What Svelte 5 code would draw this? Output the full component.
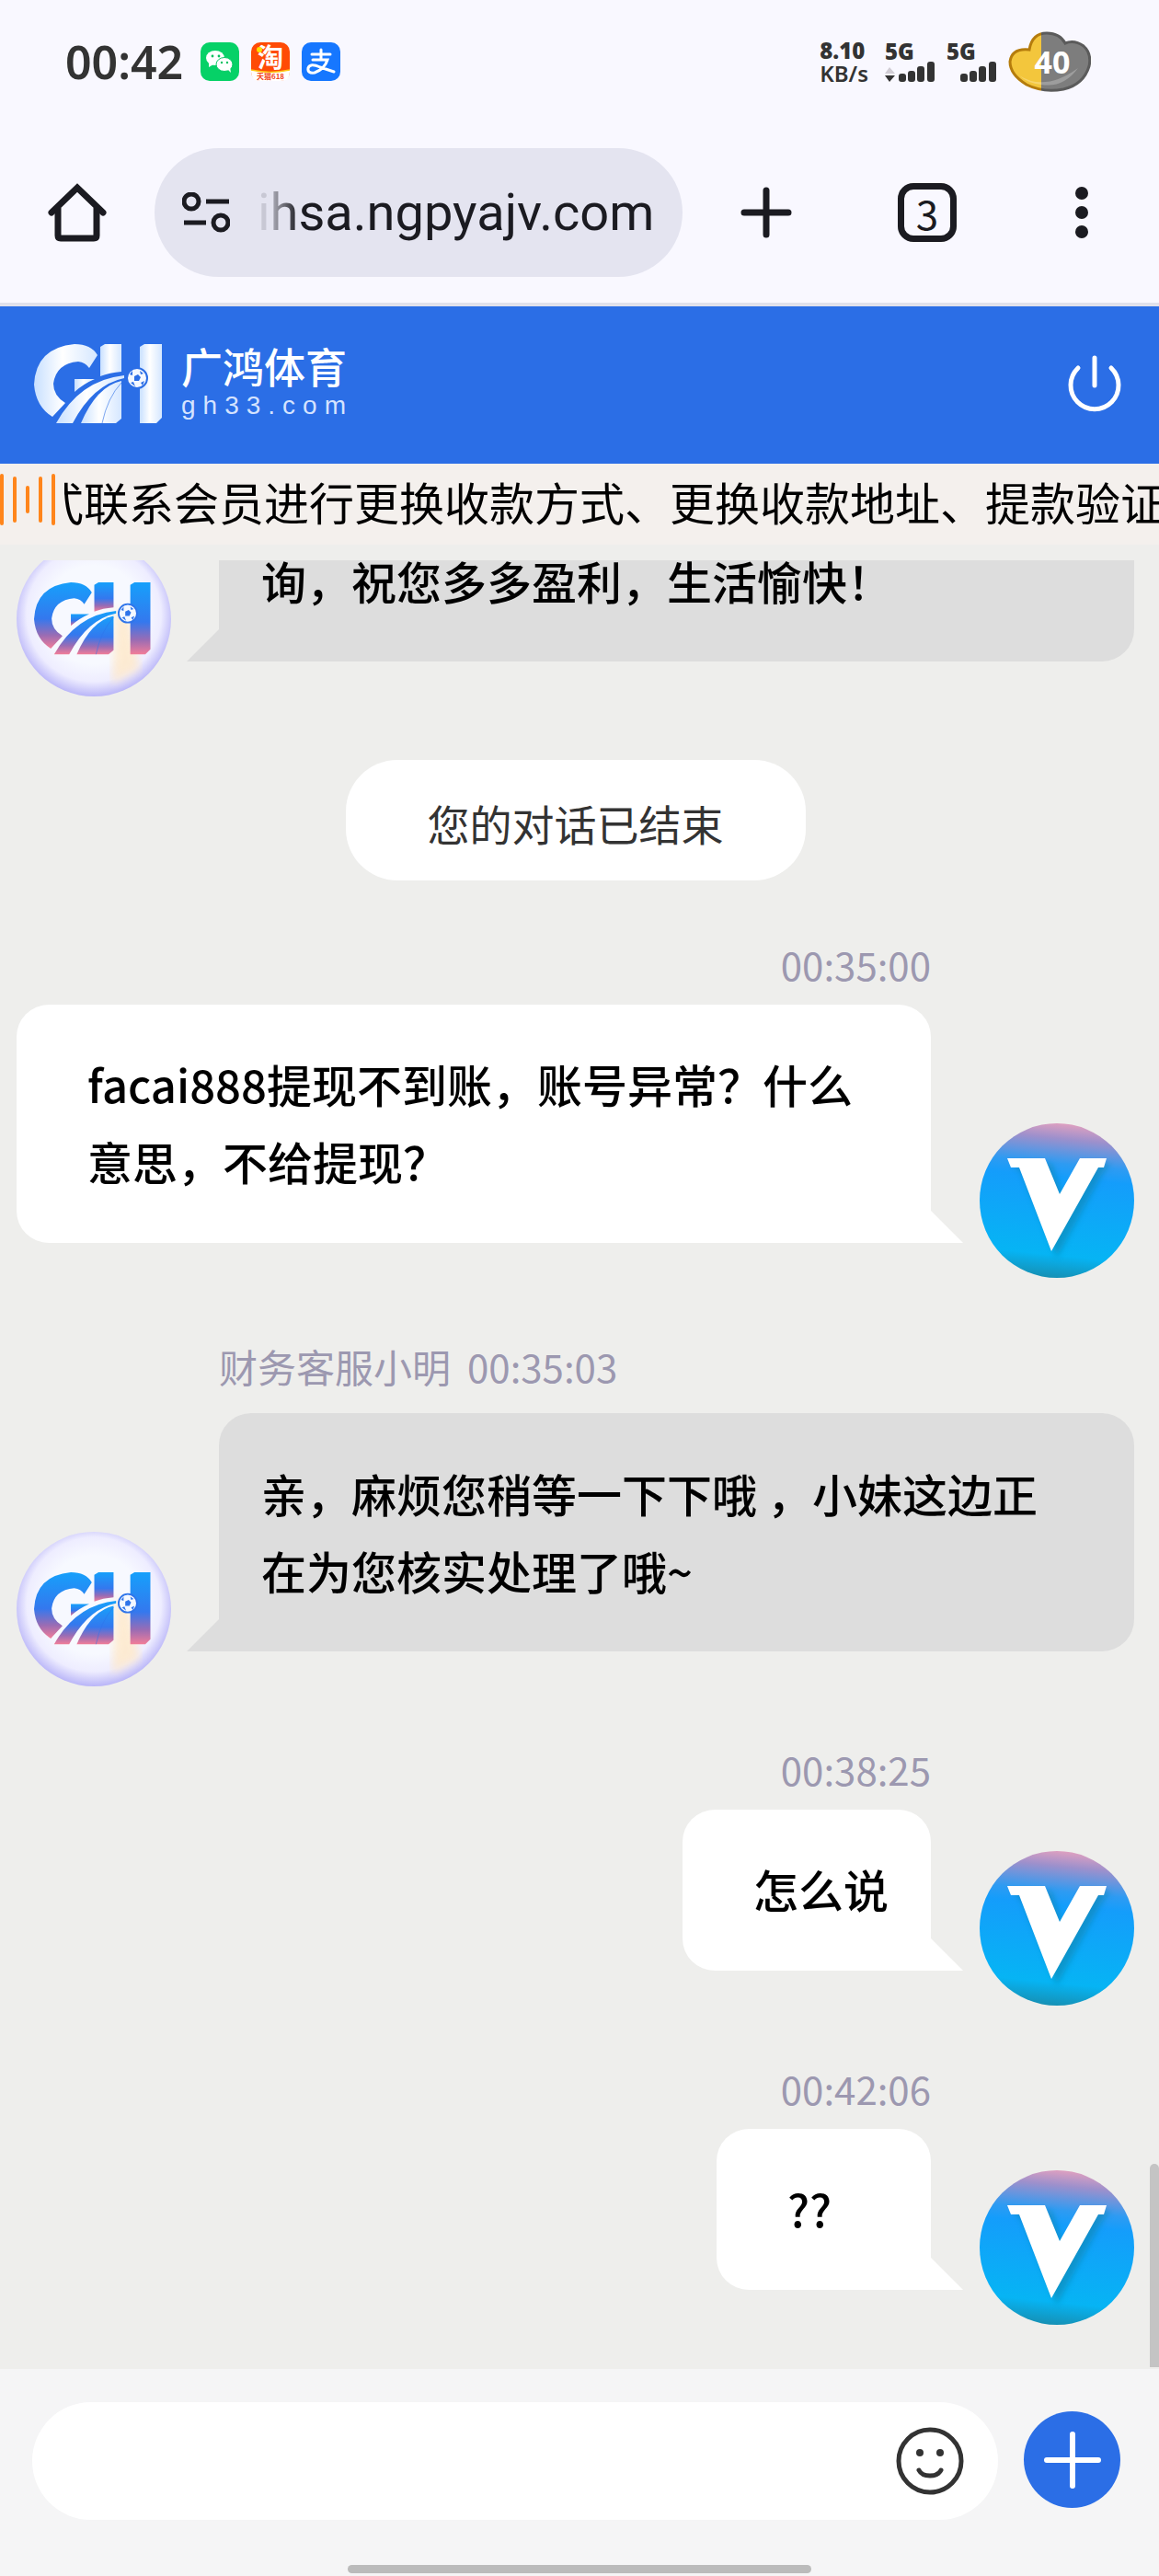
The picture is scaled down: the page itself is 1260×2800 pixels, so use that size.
<script lang="ts">
  const messages = [
    { from: "agent", name: "", time: "", text: "询，祝您多多盈利，生活愉快！" },
    { from: "notice", name: "", time: "", text: "您的对话已结束" },
    { from: "user", name: "", time: "00:35:00", text: "facai888提现不到账，账号异常？什么意思，不给提现？" },
    { from: "agent", name: "财务客服小明", time: "00:35:03", text: "亲，麻烦您稍等一下下哦 ，小妹这边正在为您核实处理了哦~" },
    { from: "user", name: "", time: "00:38:25", text: "怎么说" },
    { from: "user", name: "", time: "00:42:06", text: "??" },
  ];

  let draft = "";
</script>

<svelte:head>
  <title>广鸿体育</title>
</svelte:head>

{#snippet ghMark(fill, ball)}
  <path
    {fill}
    d="M69 12 L60 26 Q56 20 48 19 Q24 21 21 43 Q21 56 34 64 L20 79 Q2 68 0 44 Q2 4 44 0 Q62 0 69 12 Z"
  />
  <path {fill} d="M72 3 L77 0 H95 V30 Q82 31 72 35 Z" />
  <path {fill} d="M115 3 L120 0 H139 V80 L133 86 H115 Z" />
  <path {fill} d="M44 38 H66 Q54 43 44 52 Z" />
  <path {fill} d="M24 86 Q50 39 98 34 V37 Q64 44 42 86 Z" />
  <path {fill} d="M51 86 Q68 46 95 40 V81 L89 86 Z" />
  <path fill="none" stroke={ball} stroke-width="1" opacity="0.6" d="M74 86 Q80 58 95 42" />
  <circle cx="112" cy="37" r="11" fill="#f4f8ff" stroke={ball} stroke-width="2" />
  <path
    fill={ball}
    d="M109 35 L113 33 L116 36 L114 40 L109 40 Z M104 33 L107 29 L107 34 Z M115 29 L119 32 L116 33 Z M105 42 L108 41 L110 46 Z M116 42 L120 40 L118 45 Z"
  />
{/snippet}

{#snippet signal()}
  <rect x="0" y="13" width="8" height="9" rx="3" />
  <rect x="10" y="10" width="8" height="12" rx="3" />
  <rect x="20" y="5" width="8" height="17" rx="3" />
  <rect x="31" y="0" width="8" height="22" rx="3" />
{/snippet}

<div class="screen">
  <div class="status">
    <span class="clock">00:42</span>
    <svg class="app" viewBox="0 0 42 42">
      <rect width="42" height="42" rx="10" fill="#06d167" />
      <ellipse cx="16" cy="17" rx="10" ry="8" fill="#fff" />
      <path d="M9 22 L9 27 L14 24 Z" fill="#fff" />
      <circle cx="13" cy="15" r="1.4" fill="#06c160" />
      <circle cx="20" cy="15" r="1.4" fill="#06c160" />
      <ellipse cx="26" cy="24" rx="9" ry="7.5" fill="#fff" stroke="#06c964" stroke-width="1" />
      <path d="M29 29 L33 33 L32 27 Z" fill="#fff" />
      <circle cx="23" cy="22" r="1.2" fill="#06c160" />
      <circle cx="29" cy="22" r="1.2" fill="#06c160" />
    </svg>
    <svg class="app" viewBox="0 0 42 42">
      <rect width="42" height="42" rx="10" fill="#ff4b05" />
      <path d="M0 30 Q21 35 42 30 V32 Q42 42 32 42 H10 Q0 42 0 32 Z" fill="#fff" />
      <path d="M0 30 Q21 35 42 30" fill="none" stroke="#ffc814" stroke-width="1.5" />
      <text x="7" y="27" font-size="28" font-weight="700" fill="#fff">淘</text>
      <circle cx="9" cy="8" r="3" fill="#ffe000" />
      <text x="21" y="40" font-size="8" font-weight="700" fill="#f2471c" text-anchor="middle">天猫618</text>
    </svg>
    <svg class="app" viewBox="0 0 42 42">
      <rect width="42" height="42" rx="10" fill="#1677ff" />
      <g fill="none" stroke="#fff" stroke-linecap="round" stroke-width="3">
        <path d="M11 13 H31 M21 8 V19 M12 19 H28 Q25 29 14 33 Q6 34 7 28 Q9 22 20 27 L35 32" />
      </g>
    </svg>
    <div class="status-right">
      <div class="speed"><b>8.10</b><span>KB/s</span></div>
      <div class="net">
        <b>5G</b>
        <svg viewBox="0 0 55 22" fill="#333">
          <path d="M0 13 L5 6 L11 13 Z" fill="#d0ccd4" />
          <path d="M0 15 H11 L5 22 Z" />
          <g transform="translate(15 0)">{@render signal()}</g>
        </svg>
      </div>
      <div class="net">
        <b>5G</b>
        <svg viewBox="0 0 55 22" fill="#333">
          <g transform="translate(15 0)">{@render signal()}</g>
        </svg>
      </div>
      <svg class="battery" viewBox="0 0 90 66">
        <defs>
          <linearGradient id="charge">
            <stop offset="0.39" stop-color="#f3c63c" />
            <stop offset="0.39" stop-color="#7d7d7d" />
          </linearGradient>
          <linearGradient id="rim">
            <stop offset="0.39" stop-color="#b57c0c" />
            <stop offset="0.39" stop-color="#5b5b5b" />
          </linearGradient>
        </defs>
        <path
          d="M23 20 Q26 2 42 2 Q56 2 62 13 Q72 9 82 16 Q91 24 88 38 Q82 58 60 63 Q38 67 20 58 Q2 47 2 33 Q4 18 23 20 Z"
          fill="url(#charge)"
          stroke="url(#rim)"
          stroke-width="3"
        />
        <path d="M12 48 Q40 66 76 40 Q60 62 36 58 Q20 56 12 48 Z" fill="#fff" opacity="0.25" />
        <text x="48" y="46" font-size="34" font-weight="700" fill="#fff" text-anchor="middle">40</text>
      </svg>
    </div>
  </div>

  <div class="browser">
    <button class="home" aria-label="Home">
      <svg width="64" height="64" viewBox="0 0 64 64" fill="none" stroke="#1b1b21" stroke-width="7">
        <path d="M4 32 L32 5 L60 32" stroke-linecap="round" />
        <path d="M11 27 V57 Q11 60 14 60 H50 Q53 60 53 57 V27" />
      </svg>
    </button>
    <div class="address">
      <svg width="52" height="44" viewBox="0 0 52 44" fill="none" stroke="#1b1b21" stroke-width="5">
        <circle cx="10" cy="10" r="8" />
        <circle cx="42" cy="33" r="8" />
        <path d="M26 10 H51 M2 33 H26" />
      </svg>
      <input aria-label="Address" value="ihsa.ngpyajv.com" />
    </div>
    <button class="new-tab" aria-label="New tab">
      <svg width="56" height="56" viewBox="0 0 56 56" stroke="#1b1b21" stroke-width="7" stroke-linecap="round">
        <path d="M28 4 V52 M4 28 H52" />
      </svg>
    </button>
    <button class="tabs" aria-label="Tabs">3</button>
    <button class="more" aria-label="More">
      <svg width="14" height="58" viewBox="0 0 14 58" fill="#1b1b21">
        <circle cx="7" cy="8" r="7" />
        <circle cx="7" cy="29" r="7" />
        <circle cx="7" cy="50" r="7" />
      </svg>
    </button>
  </div>

  <header>
    <svg width="140" height="86" viewBox="0 0 140 86">
      <defs>
        <linearGradient id="ice">
          <stop offset="0" stop-color="#c8e0ff" />
          <stop offset="0.45" stop-color="#fff" />
          <stop offset="1" stop-color="#d5e7ff" />
        </linearGradient>
      </defs>
      {@render ghMark("url(#ice)", "#2c6ee6")}
    </svg>
    <div class="brand">
      <strong>广鸿体育</strong>
      <span>gh33.com</span>
    </div>
    <button aria-label="退出">
      <svg width="60" height="64" viewBox="0 0 60 64" fill="none" stroke="#fff" stroke-width="5" stroke-linecap="round">
        <path d="M30 4 V34 M12 15 A26 26 0 1 0 48 15" />
      </svg>
    </button>
  </header>

  <div class="marquee">
    <svg width="62" height="60" viewBox="0 0 62 60" stroke="#ff851b" stroke-width="4" stroke-linecap="round">
      <path d="M2 4 V56 M16 7 V53 M30 17 V43 M44 7 V53 M58 4 V56" />
    </svg>
    <div class="marquee-window">
      <p>式联系会员进行更换收款方式、更换收款地址、提款验证</p>
    </div>
  </div>

  <main>
    {#each messages as message}
      {#if message.from === "notice"}
        <p class="notice">{message.text}</p>
      {:else}
        <div class="row {message.from}">
          {#if message.from === "agent"}
            <svg class="avatar" viewBox="0 0 168 168">
              <defs>
                <radialGradient id="pearl" cy="0.47" r="0.53">
                  <stop offset="0.6" stop-color="#f7f9ff" />
                  <stop offset="0.82" stop-color="#eeedff" />
                  <stop offset="1" stop-color="#b9b5f8" />
                </radialGradient>
                <linearGradient id="dusk" x2="0" y2="1">
                  <stop offset="0" stop-color="#16a0fb" />
                  <stop offset="0.55" stop-color="#3478ee" />
                  <stop offset="0.8" stop-color="#9a6cb4" />
                  <stop offset="1" stop-color="#f27d98" />
                </linearGradient>
                <filter id="glow"><feGaussianBlur stdDeviation="5" /></filter>
              </defs>
              <circle cx="84" cy="84" r="84" fill="url(#pearl)" />
              <path d="M108 70 L122 80 L134 138 L104 154 Z" fill="#ffe8c8" opacity="0.8" filter="url(#glow)" />
              <g transform="translate(19 44) scale(0.91 0.91)">
                {@render ghMark("url(#dusk)", "#2e74ea")}
              </g>
            </svg>
          {/if}
          <div class="body">
            {#if message.time}
              <div class="meta">
                {#if message.name}<span>{message.name}</span>{/if}
                <time>{message.time}</time>
              </div>
            {/if}
            <div class="bubble">{message.text}</div>
          </div>
          {#if message.from === "user"}
            <svg class="avatar" viewBox="0 0 168 168">
              <defs>
                <linearGradient id="sky" x1="0.55" y1="0" x2="0.45" y2="1">
                  <stop offset="0" stop-color="#dfa0c0" />
                  <stop offset="0.1" stop-color="#9d90cc" />
                  <stop offset="0.26" stop-color="#2e9bf2" />
                  <stop offset="0.35" stop-color="#149dfb" />
                  <stop offset="0.85" stop-color="#06b4f4" />
                  <stop offset="1" stop-color="#1690b4" />
                </linearGradient>
                <filter id="soft"><feGaussianBlur stdDeviation="3" /></filter>
              </defs>
              <circle cx="84" cy="84" r="84" fill="url(#sky)" />
              <path d="M36 44 H78 L92 84 L112 44 H142 L134 54 L84 146 L46 54 Z" fill="#0a86b0" opacity="0.6" filter="url(#soft)" />
              <path d="M30 38 H71 L87 77 L109 38 H138 L135 48 H129 L78 139 L43 48 H34 Z" fill="#fff" />
            </svg>
          {/if}
        </div>
      {/if}
    {/each}
    <div class="scrollbar"></div>
  </main>

  <footer>
    <div class="composer">
      <input aria-label="输入消息" bind:value={draft} />
      <button class="emoji" aria-label="表情">
        <svg width="74" height="74" viewBox="0 0 74 74" fill="none" stroke="#333" stroke-width="5" stroke-linecap="round">
          <circle cx="37" cy="37" r="34" />
          <path d="M25 47 Q28 53 37 53 Q46 53 49 47" />
          <circle cx="26" cy="28" r="4" fill="#333" stroke="none" />
          <circle cx="48" cy="28" r="4" fill="#333" stroke="none" />
        </svg>
      </button>
    </div>
    <button class="add" aria-label="更多">
      <svg width="64" height="64" viewBox="0 0 64 64" stroke="#fff" stroke-width="6" stroke-linecap="round">
        <path d="M32 4 V60 M4 32 H60" />
      </svg>
    </button>
    <div class="indicator"></div>
  </footer>
</div>

<style>
  :global(body) {
    margin: 0;
  }

  .screen {
    display: flex;
    flex-direction: column;
    height: 100vh;
    overflow: hidden;
    background: #eeeeec;
    color: #000;
    font-family: "Noto Sans CJK SC", sans-serif;
  }

  button {
    display: flex;
    align-items: center;
    justify-content: center;
    padding: 0;
    border: 0;
    background: none;
    cursor: pointer;
  }

  input {
    border: 0;
    outline: none;
    background: none;
  }

  p {
    margin: 0;
  }

  svg {
    display: block;
    flex-shrink: 0;
  }

  .status {
    display: flex;
    align-items: center;
    gap: 13px;
    height: 133px;
    padding: 0 74px 2px 71px;
    background: #f9f8ff;
    color: #333;
  }

  .clock {
    margin-right: 6px;
    font: 600 50px/60px "Noto Sans", sans-serif;
  }

  .app {
    width: 42px;
    height: 42px;
  }

  .status-right {
    display: flex;
    align-items: center;
    gap: 12px;
    margin-left: auto;
    font-family: "Noto Sans", sans-serif;
  }

  .speed {
    display: flex;
    flex-direction: column;
    margin-right: 6px;
    font: 600 24px/25px "Noto Sans", sans-serif;
  }

  .net {
    font: 600 24px/22px "Noto Sans", sans-serif;
  }

  .net svg {
    width: 55px;
    height: 22px;
  }

  .battery {
    width: 90px;
    height: 66px;
  }

  .browser {
    display: flex;
    align-items: center;
    height: 192px;
    padding: 0 77px 2px 52px;
    border-bottom: 4px solid #e0e1eb;
    background: #f9f8ff;
  }

  .address {
    display: flex;
    flex: 1;
    align-items: center;
    gap: 30px;
    min-width: 0;
    height: 140px;
    margin: 0 63px 0 52px;
    padding: 0 16px 0 30px;
    box-sizing: border-box;
    border-radius: 70px;
    background: #e4e4f0;
  }

  .address input {
    flex: 1;
    min-width: 0;
    padding: 0;
    background: linear-gradient(90deg, #c8c8d4 10px, #1b1b21 45px);
    background-clip: text;
    color: transparent;
    font: 400 56px/80px Roboto, sans-serif;
  }

  .tabs {
    width: 64px;
    height: 64px;
    margin: 0 129px 0 115px;
    border: 7px solid #1b1b21;
    border-radius: 17px;
    box-sizing: border-box;
    color: #1b1b21;
    font: 400 44px/50px "Noto Sans CJK SC", sans-serif;
  }

  header {
    display: flex;
    align-items: center;
    gap: 20px;
    height: 168px;
    padding: 0 40px 3px 37px;
    background: #2b6ee6;
    color: #fff;
  }

  header button {
    margin-left: auto;
  }

  .brand {
    display: flex;
    flex-direction: column;
    padding-bottom: 6px;
  }

  .brand strong {
    font-size: 45px;
    font-weight: 500;
    line-height: 54px;
  }

  .brand span {
    color: #d5e3ff;
    font: 400 28px/32px "Liberation Sans", sans-serif;
    letter-spacing: 8px;
  }

  .marquee {
    display: flex;
    gap: 8px;
    height: 88px;
    background: #f4f0ed;
  }

  .marquee svg {
    margin-top: 9px;
  }

  .marquee-window {
    flex: 1;
    min-width: 0;
    overflow: hidden;
  }

  .marquee p {
    margin-left: -28px;
    font-size: 49px;
    line-height: 82px;
    white-space: nowrap;
  }

  main {
    position: relative;
    display: flex;
    flex: 1;
    flex-direction: column;
    justify-content: flex-end;
    min-height: 0;
    margin-top: 17px;
    padding: 0 27px 86px 18px;
    overflow: hidden;
  }

  .row {
    display: flex;
    align-items: flex-end;
    gap: 52px;
  }

  .row.user {
    gap: 53px;
  }

  .row + .row {
    margin-top: 98px;
  }

  .row + .agent {
    margin-top: 104px;
  }

  .avatar {
    width: 168px;
    height: 168px;
    margin-bottom: -38px;
  }

  .body {
    display: flex;
    flex: 1;
    flex-direction: column;
    align-items: flex-start;
    min-width: 0;
  }

  .user .body {
    align-items: flex-end;
  }

  .meta {
    display: flex;
    gap: 18px;
    margin-bottom: 14px;
    color: #9c98b0;
    font-size: 42px;
    line-height: 60px;
  }

  .agent .meta {
    margin-bottom: 21px;
  }

  .bubble {
    position: relative;
    min-width: 233px;
    padding: 45px 77px 46px 46px;
    box-sizing: border-box;
    border-radius: 35px 35px 35px 0;
    background: #ddd;
    font-size: 49px;
    font-weight: 500;
    line-height: 84px;
  }

  .agent .bubble {
    width: 100%;
  }

  .user .bubble {
    padding: 44px 46px 47px 77px;
    border-radius: 35px 35px 0 35px;
    background: #fff;
  }

  .bubble::after {
    content: "";
    position: absolute;
    right: 100%;
    bottom: 0;
    width: 35px;
    height: 35px;
    background: inherit;
    clip-path: polygon(100% 0, 100% 100%, 0 100%);
  }

  .user .bubble::after {
    right: auto;
    left: 100%;
    clip-path: polygon(0 0, 100% 100%, 0 100%);
  }

  .notice {
    align-self: center;
    margin: 107px 0 61px;
    padding: 6px 89px 0;
    border-radius: 56px;
    background: #fff;
    color: #333;
    font-size: 46px;
    line-height: 125px;
  }

  .scrollbar {
    position: absolute;
    right: 0;
    bottom: 2px;
    width: 10px;
    height: 221px;
    border-radius: 5px 5px 0 0;
    background: #c4c4c4;
  }

  footer {
    position: relative;
    display: flex;
    align-items: flex-start;
    gap: 28px;
    height: 189px;
    padding: 36px 42px 0 35px;
    background: #f5f5f6;
  }

  .composer {
    display: flex;
    flex: 1;
    align-items: center;
    height: 128px;
    padding: 0 37px 0 48px;
    border-radius: 64px;
    background: #fff;
  }

  .composer input {
    flex: 1;
    font: 500 49px/84px "Noto Sans CJK SC", sans-serif;
  }

  .add {
    width: 105px;
    height: 105px;
    margin-top: 10px;
    border-radius: 50%;
    background: #2b6ee6;
  }

  .indicator {
    position: absolute;
    bottom: 3px;
    left: 30%;
    width: 40%;
    height: 9px;
    border-radius: 5px;
    background: #bbb;
  }
</style>
